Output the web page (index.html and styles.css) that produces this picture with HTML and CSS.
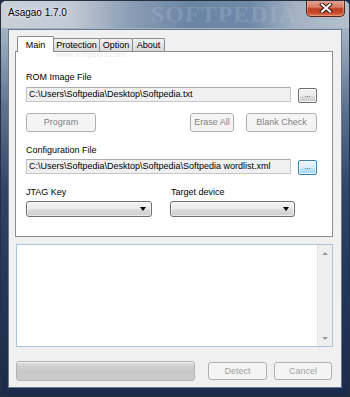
FILE: index.html
```html
<!DOCTYPE html>
<html>
<head>
<meta charset="utf-8">
<link rel="stylesheet" href="styles.css">
</head>
<body>
<div class="window">
  <div class="titlebar">
    <span class="watermark">SOFTPEDIA</span>
    <span class="title">Asagao 1.7.0</span>
    <div class="close">
      <svg width="14" height="10" viewBox="0 0 14 10"><path d="M3 1.5 L11 8.5 M11 1.5 L3 8.5" stroke="#3a1a14" stroke-width="4" stroke-linecap="square"/><path d="M3 1.5 L11 8.5 M11 1.5 L3 8.5" stroke="#ffffff" stroke-width="2" stroke-linecap="square"/></svg>
    </div>
  </div>
  <div class="client">
    <div class="tabs">
      <div class="tab active">Main</div>
      <div class="tab t-prot">Protection</div>
      <div class="tab t-opt">Option</div>
      <div class="tab t-about">About</div>
    </div>
    <div class="panel">
      <span class="wm2">www.softpedia.com</span>
      <div class="label l1">ROM Image File</div>
      <div class="filerow">
        <div class="textbox">C:\Users\Softpedia\Desktop\Softpedia.txt</div>
        <div class="browse">...</div>
      </div>
      <div class="btnrow">
        <div class="btn dis b-prog">Program</div>
        <div class="btn dis b-erase">Erase All</div>
        <div class="btn dis b-blank">Blank Check</div>
      </div>
      <div class="label l2">Configuration File</div>
      <div class="filerow r2">
        <div class="textbox">C:\Users\Softpedia\Desktop\Softpedia\Softpedia wordlist.xml</div>
        <div class="browse focus">...</div>
      </div>
      <div class="labrow">
        <div class="label lj">JTAG Key</div>
        <div class="label lt">Target device</div>
      </div>
      <div class="comborow">
        <div class="combo c1"><span class="arrow"></span></div>
        <div class="combo c2"><span class="arrow"></span></div>
      </div>
    </div>
    <div class="log">
      <div class="logtext"></div>
      <div class="scroll">
        <span class="sup"></span>
        <span class="sdown"></span>
      </div>
    </div>
    <div class="bottom">
      <div class="progress"></div>
      <div class="btn dis b-detect">Detect</div>
      <div class="btn dis b-cancel">Cancel</div>
    </div>
  </div>
</div>
</body>
</html>
```

FILE: styles.css
```css
html, body {
  margin: 0;
  padding: 0;
  background: #1b2a48;
}
body {
  font-family: "Liberation Sans", Arial, sans-serif;
  font-size: 9px;
  color: #000;
}
.window {
  width: 350px;
  height: 397px;
  box-sizing: border-box;
  display: flex;
  flex-direction: column;
  border: 1px solid #27303c;
  border-radius: 6px 6px 0 0;
  background: linear-gradient(to bottom, #b7c2ce 0px, #9aabbf 40px, #5b6f8e 110px, #2f4468 190px, #22355a 290px, #1c2b4b 100%);
  overflow: hidden;
}
.titlebar {
  height: 27px;
  display: flex;
  align-items: flex-start;
  position: relative;
  background: linear-gradient(to right, #c9d0d8 0px, #c2cad4 70px, #8a9db5 130px, #6a84a4 190px, #7089a8 250px, #a4b2c3 295px, #b5c0cc 100%);
  overflow: hidden;
}
.watermark {
  position: absolute;
  left: 150px;
  top: 0;
  line-height: 27px;
  font-family: "Liberation Serif", serif;
  font-weight: bold;
  font-size: 24px;
  letter-spacing: 1px;
  color: rgba(190, 208, 228, 0.22);
  white-space: nowrap;
}
.title {
  position: relative;
  margin-left: 7px;
  margin-top: 6px;
  font-size: 10px;
  line-height: 12px;
  text-shadow: 0 0 5px rgba(255,255,255,0.9), 0 0 2px rgba(255,255,255,0.9);
}
.close {
  position: relative;
  margin-left: auto;
  margin-right: 4px;
  margin-top: -1px;
  width: 39px;
  height: 17px;
  box-sizing: border-box;
  border: 1px solid #5a2218;
  border-top: none;
  border-radius: 0 0 5px 5px;
  background: linear-gradient(to bottom, #e4a99b 0%, #d77a64 45%, #c03f22 55%, #c9492b 80%, #dc7a58 100%);
  display: flex;
  align-items: center;
  justify-content: center;
  box-shadow: inset 0 0 0 1px rgba(255,200,180,0.4);
}
.client {
  flex: 1;
  margin: 1px 7px 8px 7px;
  border: 1px solid #6a7a90;
  background: #f0f0f0;
  display: flex;
  flex-direction: column;
  padding: 0 8px 0 6px;
}
.tabs {
  display: flex;
  align-items: flex-end;
  height: 15px;
  margin-top: 6px;
  margin-left: 2px;
}
.tab {
  box-sizing: border-box;
  height: 13px;
  border: 1px solid #898c95;
  border-bottom: none;
  border-radius: 2px 2px 0 0;
  background: linear-gradient(to bottom, #f3f3f3, #e3e3e3 50%, #d9d9d9);
  text-align: center;
  line-height: 12px;
  margin-left: -1px;
}
.tab.active {
  width: 37px;
  height: 16px;
  margin-bottom: -1px;
  margin-left: 0;
  background: #ffffff;
  position: relative;
  z-index: 1;
  line-height: 15px;
  padding-top: 1px;
}
.t-prot { width: 47px; }
.t-opt { width: 34px; }
.t-about { width: 33px; }
.panel {
  position: relative;
  box-sizing: border-box;
  width: 318px;
  height: 186px;
  border: 1px solid #898c95;
  background: #ffffff;
  padding: 20px 0 0 10px;
}
.wm2 {
  position: absolute;
  left: 40px;
  top: -2px;
  font-size: 8px;
  color: rgba(160,160,160,0.3);
}
.label {
  line-height: 11px;
  height: 11px;
  white-space: nowrap;
}
.filerow {
  display: flex;
  align-items: flex-start;
  margin-top: 4px;
}
.filerow.r2 { margin-top: 3px; }
.textbox {
  box-sizing: border-box;
  width: 265px;
  height: 15px;
  border: 1px solid #c4c6ca;
  border-top-color: #abadb3;
  background: #f0f0f0;
  line-height: 13px;
  padding-left: 2px;
  white-space: nowrap;
  overflow: hidden;
}
.browse {
  box-sizing: border-box;
  width: 19px;
  height: 15px;
  margin-left: 7px;
  margin-top: 1px;
  border: 1px solid #707070;
  border-radius: 2px;
  background: linear-gradient(to bottom, #f2f2f2 0%, #ebebeb 50%, #dddddd 51%, #cfcfcf 100%);
  font-size: 7px;
  line-height: 12px;
  text-align: center;
  color: #333;
  box-shadow: inset 0 0 0 1px rgba(255,255,255,0.7);
}
.browse.focus {
  border-color: #3c7fb1;
  background: linear-gradient(to bottom, #eaf6fd 0%, #d9f0fc 50%, #bee6fd 51%, #a7d9f5 100%);
}
.btnrow {
  display: flex;
  margin-top: 10px;
}
.btn {
  box-sizing: border-box;
  height: 19px;
  border: 1px solid #adb2b5;
  border-radius: 3px;
  background: #f4f4f4;
  color: #838383;
  text-align: center;
  line-height: 17px;
  white-space: nowrap;
}
.b-prog { width: 70px; }
.b-erase { width: 44px; margin-left: 94px; }
.b-blank { width: 71px; margin-left: 12px; }
.l2 { margin-top: 13px; }
.labrow {
  display: flex;
  margin-top: 12px;
}
.lj { width: 145px; }
.comborow {
  display: flex;
  margin-top: 3px;
}
.combo {
  box-sizing: border-box;
  height: 16px;
  border: 1px solid #707070;
  border-radius: 3px;
  background: linear-gradient(to bottom, #f2f2f2 0%, #ebebeb 50%, #dddddd 51%, #cfcfcf 100%);
  box-shadow: inset 0 0 0 1px rgba(255,255,255,0.6);
  display: flex;
  align-items: center;
  justify-content: flex-end;
  padding-right: 5px;
}
.c1 { width: 126px; }
.c2 { width: 125px; margin-left: 18px; }
.arrow {
  width: 0;
  height: 0;
  border-left: 3.5px solid transparent;
  border-right: 3.5px solid transparent;
  border-top: 4px solid #000;
}
.log {
  box-sizing: border-box;
  width: 317px;
  height: 103px;
  margin-top: 7px;
  margin-left: 1px;
  border: 1px solid #a9c4de;
  background: #ffffff;
  display: flex;
}
.logtext { flex: 1; }
.scroll {
  width: 14px;
  background: #efefef;
  border-left: 1px solid #e6e6e6;
  display: flex;
  flex-direction: column;
  justify-content: space-between;
  align-items: center;
  padding: 7px 0 6px 0;
}
.sup {
  width: 0; height: 0;
  border-left: 3px solid transparent;
  border-right: 3px solid transparent;
  border-bottom: 3px solid #9a9a9a;
}
.sdown {
  width: 0; height: 0;
  border-left: 3px solid transparent;
  border-right: 3px solid transparent;
  border-top: 3px solid #9a9a9a;
}
.bottom {
  display: flex;
  align-items: flex-start;
  margin-top: 14px;
  margin-left: 1px;
}
.progress {
  box-sizing: border-box;
  width: 179px;
  height: 20px;
  border: 1px solid #b2b2b2;
  border-radius: 3px;
  background: linear-gradient(to bottom, #e2e2e2 0%, #cfcfcf 25%, #c8c8c8 60%, #cccccc 100%);
  box-shadow: inset 0 1px 0 #eeeeee;
}
.b-detect { width: 59px; height: 18px; margin-left: 13px; margin-top: 1px; line-height: 16px; color: #a0a0a0; }
.b-cancel { width: 58px; height: 18px; margin-left: 7px; margin-top: 1px; line-height: 16px; color: #a0a0a0; }
```
